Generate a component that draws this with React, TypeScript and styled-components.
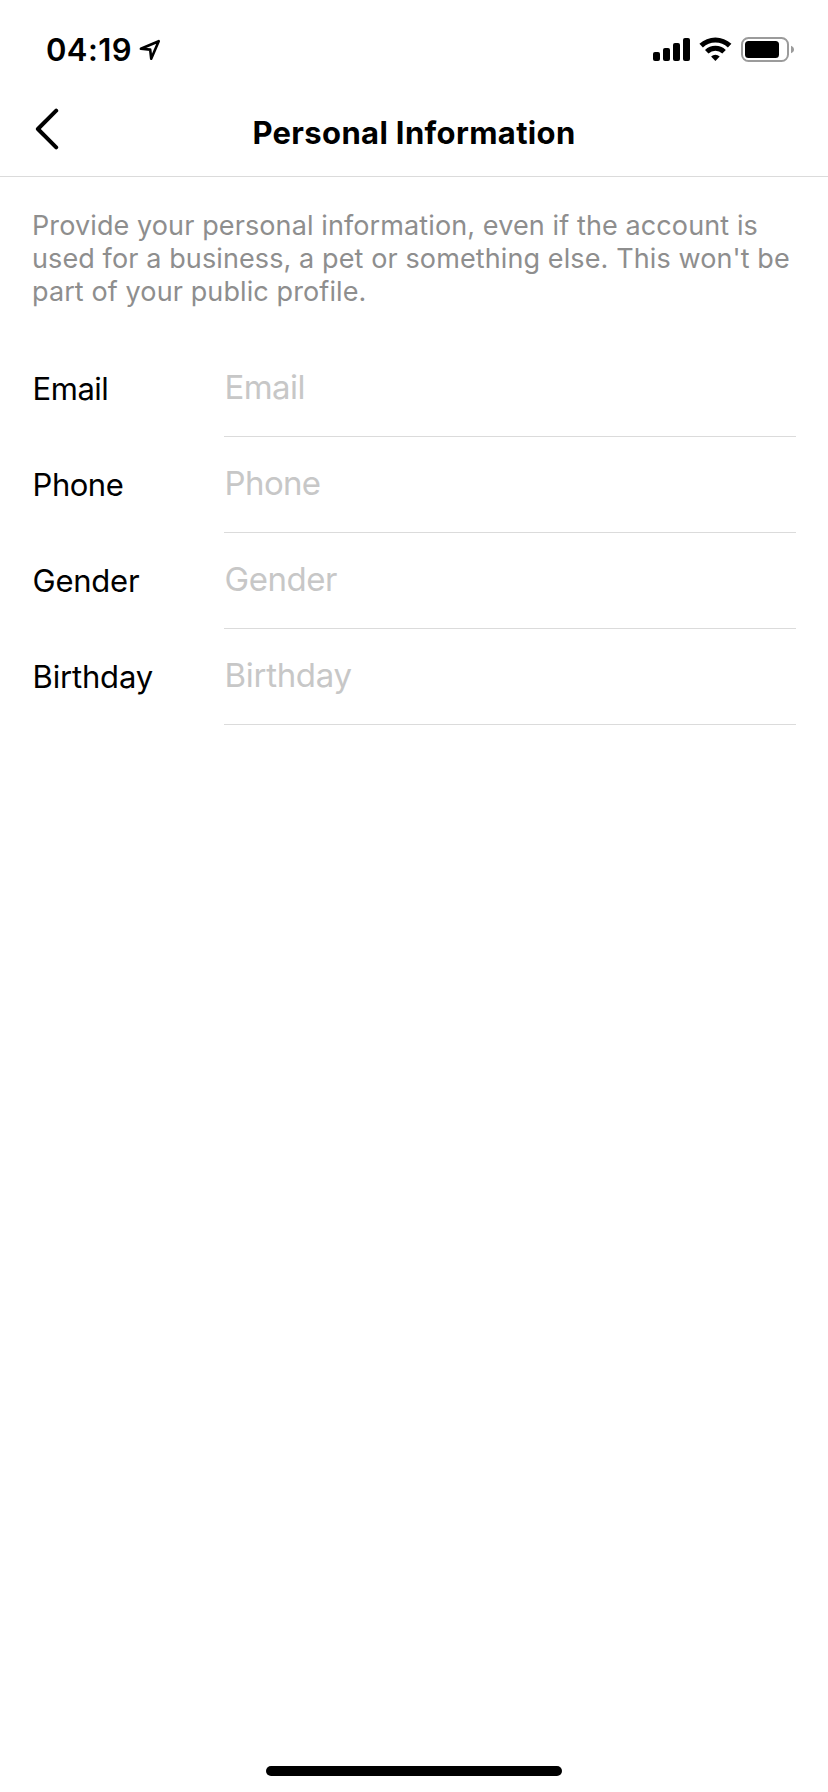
import React from 'react';
import styled, { createGlobalStyle } from 'styled-components';

const GlobalStyle = createGlobalStyle`
  * { box-sizing: border-box; }
  body {
    margin: 0;
    background: #fff;
    font-family: Inter, 'Liberation Sans', sans-serif;
  }
`;

const Screen = styled.main`
  display: flex;
  flex-direction: column;
  width: 828px;
  height: 1792px;
  background: #fff;
  color: #000;
`;

const StatusBar = styled.div`
  display: flex;
  justify-content: space-between;
  align-items: flex-start;
  height: 88px;
  padding: 30px 34px 0 46px;
`;

const TimeGroup = styled.div`
  display: flex;
  gap: 6px;
`;

const Time = styled.span`
  font-size: 31px;
  font-weight: 600;
  line-height: 40px;
  letter-spacing: 0.4px;
`;

const LocationIcon = styled.svg`
  display: block;
  width: 24px;
  height: 24px;
  margin-top: 8px;
`;

const StatusIcons = styled.svg`
  display: block;
  width: 142px;
  height: 26px;
  margin-top: 7px;
`;

const NavBar = styled.header`
  display: grid;
  grid-template-columns: 90px 1fr 90px;
  height: 89px;
  border-bottom: 1px solid #dbdbdb;
`;

const BackButton = styled.button`
  display: flex;
  align-items: flex-start;
  padding: 20px 0 0 35px;
  border: 0;
  background: none;
`;

const Title = styled.h1`
  margin: 0;
  padding-top: 25px;
  font-size: 31px;
  font-weight: 700;
  line-height: 40px;
  letter-spacing: 0.35px;
  text-align: center;
`;

const Content = styled.section`
  display: flex;
  flex-direction: column;
  flex: 1;
  gap: 33px;
  padding: 32px 32px 0;
`;

const Description = styled.p`
  margin: 0;
  color: #8e8e8e;
  font-size: 27px;
  line-height: 33px;
  letter-spacing: 0.108px;
  white-space: nowrap;
`;

const Form = styled.div`
  display: flex;
  flex-direction: column;
`;

const Field = styled.div`
  display: grid;
  grid-template-columns: 192px 1fr;
  height: 96px;
`;

const Label = styled.span<{ $tracking: number }>`
  padding-left: 0.6px;
  font-size: 31px;
  line-height: 95px;
  letter-spacing: ${(p) => p.$tracking}px;
`;

const Value = styled.div<{ $tracking: number }>`
  padding-left: 0.6px;
  border-bottom: 1px solid #dbdbdb;
  color: #c7c7c7;
  font-size: 33px;
  line-height: 92px;
  letter-spacing: ${(p) => p.$tracking}px;
`;

const HomeArea = styled.footer`
  display: flex;
  justify-content: center;
  padding-bottom: 16px;
`;

const HomeIndicator = styled.div`
  width: 296px;
  height: 10px;
  border-radius: 5px;
  background: #000;
`;

const fields = [
  { name: 'Email', label: -0.5, value: -0.62 },
  { name: 'Phone', label: -0.5, value: -0.65 },
  { name: 'Gender', label: -0.25, value: -0.5 },
  { name: 'Birthday', label: -0.18, value: -0.32 },
];

export default function App() {
  return (
    <>
      <GlobalStyle />
      <Screen>
        <StatusBar>
          <TimeGroup>
            <Time>04:19</Time>
            <LocationIcon viewBox="0 0 24 24" fill="none">
              <path
                d="M2.9 10.8 20.7 3.2 13.2 20.7 12.2 11.6Z"
                stroke="#000"
                strokeWidth="2.6"
                strokeLinejoin="round"
              />
            </LocationIcon>
          </TimeGroup>
          <StatusIcons viewBox="0 0 142 26">
            <rect x="1" y="15" width="7" height="9" rx="2" />
            <rect x="11" y="11" width="7" height="13" rx="2" />
            <rect x="21" y="6" width="7" height="18" rx="2" />
            <rect x="31" y="1" width="7" height="23" rx="2" />
            <path d="M47.4 6.8A23.5 23.5 0 0 1 79.4 6.8L75.9 10.4A18.4 18.4 0 0 0 50.9 10.4Z" />
            <path d="M53 12.9A15.2 15.2 0 0 1 73.8 12.9L70.3 16.5A10.3 10.3 0 0 0 56.5 16.5Z" />
            <path d="M59.1 19.4A6.3 6.3 0 0 1 67.7 19.4L63.4 24Z" />
            <rect x="90" y="1" width="46" height="23" rx="6.5" fill="none" stroke="#9b9b9b" strokeWidth="2" />
            <rect x="93" y="4" width="34" height="17" rx="3.5" />
            <path d="M139 8.7C141 9.5 142 10.9 142 12.5S141 15.5 139 16.3Z" fill="#9b9b9b" />
          </StatusIcons>
        </StatusBar>
        <NavBar>
          <BackButton aria-label="Back">
            <svg width="25" height="42" viewBox="0 0 25 42" fill="none">
              <path
                d="M21.2 2.7 2.9 21 21.2 39.3"
                stroke="#000"
                strokeWidth="4"
                strokeLinecap="round"
                strokeLinejoin="round"
              />
            </svg>
          </BackButton>
          <Title>Personal Information</Title>
        </NavBar>
        <Content>
          <Description>
            Provide your personal information, even if the account is
            <br />
            used for a business, a pet or something else. This won't be
            <br />
            part of your public profile.
          </Description>
          <Form>
            {fields.map((f) => (
              <Field key={f.name}>
                <Label $tracking={f.label}>{f.name}</Label>
                <Value $tracking={f.value}>{f.name}</Value>
              </Field>
            ))}
          </Form>
        </Content>
        <HomeArea>
          <HomeIndicator />
        </HomeArea>
      </Screen>
    </>
  );
}
